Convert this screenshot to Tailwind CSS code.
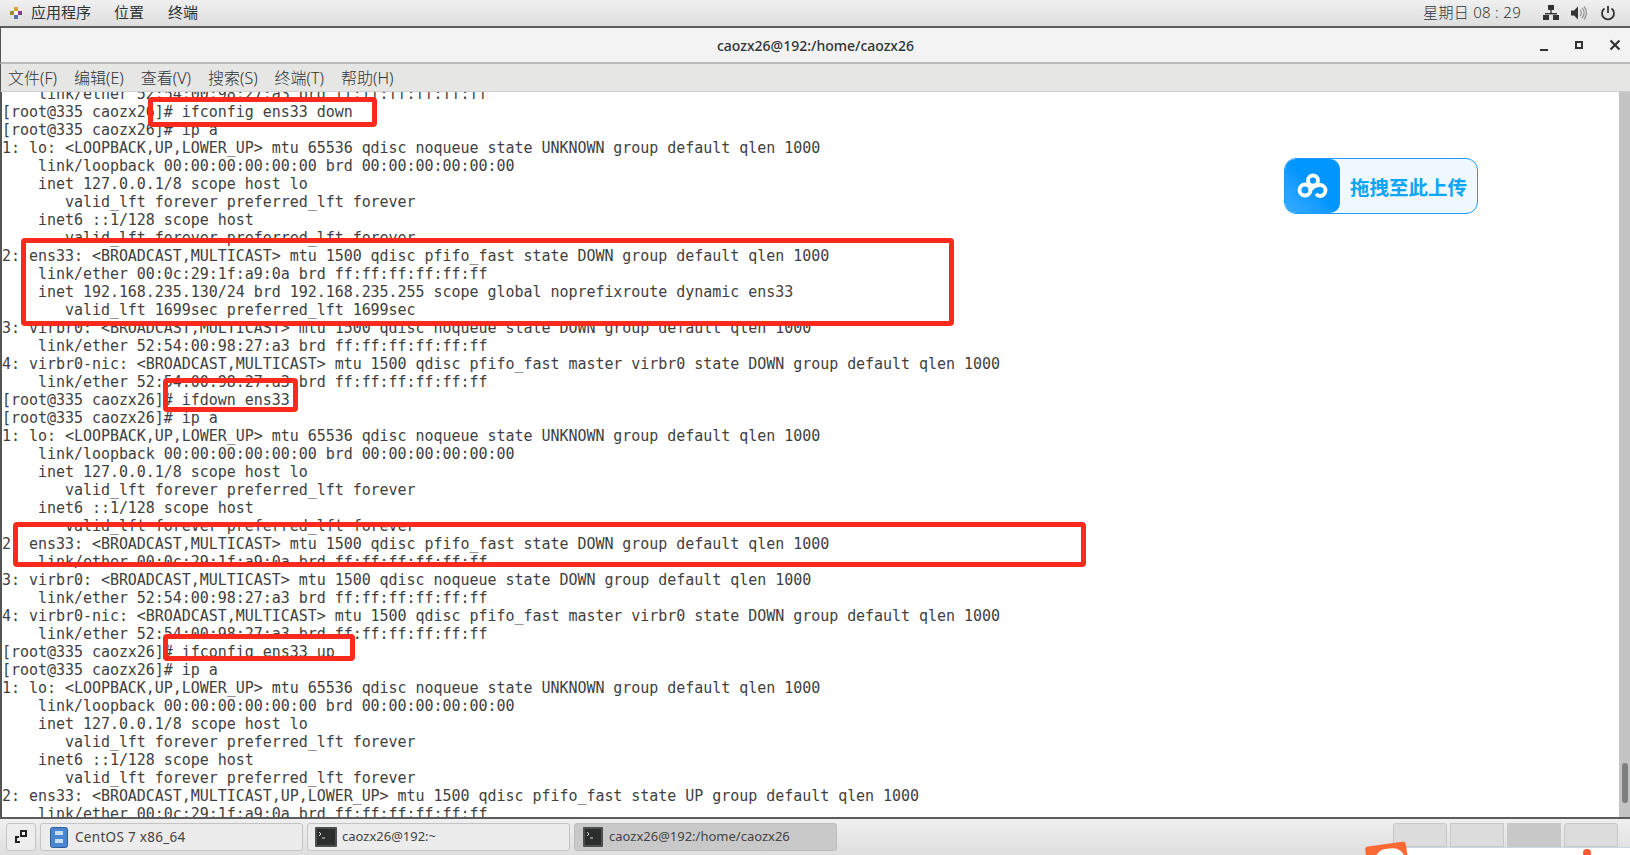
<!DOCTYPE html>
<html lang="en">
<head>
  <meta charset="UTF-8">
  <title>caozx26@192:/home/caozx26</title>
  <script src="https://cdn.jsdelivr.net/npm/@tailwindcss/browser@4"></script>
</head>
<body class="w-[1630px] h-[855px] overflow-hidden bg-white flex flex-col font-['Noto_Sans','Noto_Sans_CJK_SC',sans-serif] text-[#2e3436]">
  <!-- top panel -->
  <header class="h-[28px] shrink-0 flex items-center justify-between bg-gradient-to-b from-[#f0f0f0] to-[#dedede] border-b-2 border-[#5c5c5c] pl-[9px] pr-[14px] pb-[1px] text-[15px]">
    <div class="flex items-center">
      <svg width="14" height="14" viewBox="0 0 14 14" class="mr-[8px]">
        <rect x="1" y="5" width="4" height="4" fill="#9b8a2f"/><rect x="5" y="1" width="4" height="4" fill="#d6a431"/>
        <rect x="9" y="5" width="4" height="4" fill="#8a3f8f"/><rect x="5" y="9" width="4" height="4" fill="#4f6fa8"/>
        <rect x="5" y="5" width="4" height="4" fill="#ffffff"/>
      </svg>
      <span class="mr-[23px]">应用程序</span>
      <span class="mr-[24px]">位置</span>
      <span>终端</span>
    </div>
    <div class="flex items-center">
      <span class="mr-[22px] font-light tracking-[0.3px]">星期日 08 : 29</span>
      <svg width="16" height="16" viewBox="0 0 16 16" fill="#333" class="mr-[12px]"><rect x="5" y="0" width="6" height="5"/><rect x="7.3" y="5" width="1.4" height="4"/><rect x="2" y="8" width="12" height="1.4"/><rect x="0" y="10" width="6" height="5"/><rect x="10" y="10" width="6" height="5"/></svg>
      <svg width="16" height="16" viewBox="0 0 16 16" fill="none" class="mr-[13px]"><path d="M0 5.5h3l4-4v13l-4-4H0z" fill="#333"/><path d="M9 5a4 4 0 0 1 0 6M11 3a7 7 0 0 1 0 10M13 1.500a10 10 0 0 1 0 13" stroke="#999" stroke-width="1.300"/></svg>
      <svg width="16" height="16" viewBox="0 0 16 16" fill="none" stroke="#333" stroke-width="1.800"><path d="M4.500 3.500a6 6 0 1 0 7 0M8 1v7"/></svg>
    </div>
  </header>

  <!-- window title -->
  <div class="h-[36px] shrink-0 relative flex items-center justify-center bg-[#f3f3f3] border-b-2 border-[#b9b9b9] border-l border-l-[#555] font-medium text-[14px]">
    <span>caozx26@192:/home/caozx26</span>
    <div class="absolute right-[9px] top-0 h-full flex items-center gap-[26px]">
      <svg width="10" height="10" viewBox="0 0 10 10" fill="#333" class="mt-[3px]"><rect x="1" y="7" width="8" height="2"/></svg>
      <svg width="8" height="8" viewBox="0 0 8 8" fill="none" stroke="#333" stroke-width="2"><rect x="1" y="1" width="6" height="6"/></svg>
      <svg width="12" height="12" viewBox="0 0 12 12" fill="none" stroke="#333" stroke-width="2.200"><path d="M1.500 1.500l9 9M10.500 1.500l-9 9"/></svg>
    </div>
  </div>

  <!-- menu bar -->
  <nav class="h-[28px] shrink-0 flex items-center gap-[17px] pl-[7px] bg-[#e6e6e5] border-b border-[#cfcfcf] border-l border-l-[#555] text-[16px] leading-[20px] font-light">
    <span>文件(F)</span><span>编辑(E)</span><span>查看(V)</span><span>搜索(S)</span><span>终端(T)</span><span>帮助(H)</span>
  </nav>

  <!-- terminal -->
  <main class="h-[725px] shrink-0 relative overflow-hidden bg-white border-l-2 border-[#555] flex">
<pre class="flex-1 -mt-[7px] font-['DejaVu_Sans_Mono',monospace] text-[15px] leading-[18px] tracking-[-0.04px] text-[#3f3f3f]">    link/ether 52:54:00:98:27:a3 brd ff:ff:ff:ff:ff:ff
[root@335 caozx26]# ifconfig ens33 down
[root@335 caozx26]# ip a
1: lo: &lt;LOOPBACK,UP,LOWER_UP&gt; mtu 65536 qdisc noqueue state UNKNOWN group default qlen 1000
    link/loopback 00:00:00:00:00:00 brd 00:00:00:00:00:00
    inet 127.0.0.1/8 scope host lo
       valid_lft forever preferred_lft forever
    inet6 ::1/128 scope host
       valid_lft forever preferred_lft forever
2: ens33: &lt;BROADCAST,MULTICAST&gt; mtu 1500 qdisc pfifo_fast state DOWN group default qlen 1000
    link/ether 00:0c:29:1f:a9:0a brd ff:ff:ff:ff:ff:ff
    inet 192.168.235.130/24 brd 192.168.235.255 scope global noprefixroute dynamic ens33
       valid_lft 1699sec preferred_lft 1699sec
3: virbr0: &lt;BROADCAST,MULTICAST&gt; mtu 1500 qdisc noqueue state DOWN group default qlen 1000
    link/ether 52:54:00:98:27:a3 brd ff:ff:ff:ff:ff:ff
4: virbr0-nic: &lt;BROADCAST,MULTICAST&gt; mtu 1500 qdisc pfifo_fast master virbr0 state DOWN group default qlen 1000
    link/ether 52:54:00:98:27:a3 brd ff:ff:ff:ff:ff:ff
[root@335 caozx26]# ifdown ens33
[root@335 caozx26]# ip a
1: lo: &lt;LOOPBACK,UP,LOWER_UP&gt; mtu 65536 qdisc noqueue state UNKNOWN group default qlen 1000
    link/loopback 00:00:00:00:00:00 brd 00:00:00:00:00:00
    inet 127.0.0.1/8 scope host lo
       valid_lft forever preferred_lft forever
    inet6 ::1/128 scope host
       valid_lft forever preferred_lft forever
2: ens33: &lt;BROADCAST,MULTICAST&gt; mtu 1500 qdisc pfifo_fast state DOWN group default qlen 1000
    link/ether 00:0c:29:1f:a9:0a brd ff:ff:ff:ff:ff:ff
3: virbr0: &lt;BROADCAST,MULTICAST&gt; mtu 1500 qdisc noqueue state DOWN group default qlen 1000
    link/ether 52:54:00:98:27:a3 brd ff:ff:ff:ff:ff:ff
4: virbr0-nic: &lt;BROADCAST,MULTICAST&gt; mtu 1500 qdisc pfifo_fast master virbr0 state DOWN group default qlen 1000
    link/ether 52:54:00:98:27:a3 brd ff:ff:ff:ff:ff:ff
[root@335 caozx26]# ifconfig ens33 up
[root@335 caozx26]# ip a
1: lo: &lt;LOOPBACK,UP,LOWER_UP&gt; mtu 65536 qdisc noqueue state UNKNOWN group default qlen 1000
    link/loopback 00:00:00:00:00:00 brd 00:00:00:00:00:00
    inet 127.0.0.1/8 scope host lo
       valid_lft forever preferred_lft forever
    inet6 ::1/128 scope host
       valid_lft forever preferred_lft forever
2: ens33: &lt;BROADCAST,MULTICAST,UP,LOWER_UP&gt; mtu 1500 qdisc pfifo_fast state UP group default qlen 1000
    link/ether 00:0c:29:1f:a9:0a brd ff:ff:ff:ff:ff:ff</pre>
    <!-- scrollbar -->
    <div class="w-[11px] shrink-0 bg-[#c3c4c3] flex justify-center items-end pb-[14px]">
      <div class="w-[6px] h-[40px] rounded-full bg-[#7d7f7e]"></div>
    </div>

    <!-- red annotation boxes -->
    <div class="absolute left-[146px] top-[5px] w-[229px] h-[30px] border-[5px] border-[#fb2a1c] rounded-[4px]"></div>
    <div class="absolute left-[19px] top-[146px] w-[933px] h-[88px] border-[5px] border-[#fb2a1c] rounded-[4px]"></div>
    <div class="absolute left-[161px] top-[286px] w-[135px] h-[34px] border-[5px] border-[#fb2a1c] rounded-[4px]"></div>
    <div class="absolute left-[11px] top-[430px] w-[1073px] h-[45px] border-[5px] border-[#fb2a1c] rounded-[4px]"></div>
    <div class="absolute left-[161px] top-[542px] w-[192px] h-[27px] border-[5px] border-[#fb2a1c] rounded-[4px]"></div>

    <!-- upload badge -->
    <div class="absolute left-[1282px] top-[66px] w-[194px] h-[56px] rounded-[12px] border border-[#1f9bff] bg-[#eff8ff] flex items-center overflow-hidden">
      <div class="w-[55px] h-full rounded-[10px] bg-gradient-to-tr from-[#35acff] to-[#0096ff] to-50% flex items-center justify-center">
        <svg width="32" height="26" viewBox="0 0 32 26" fill="none" stroke="#fff" stroke-width="3.800"><circle cx="16" cy="7.500" r="5"/><circle cx="8" cy="17" r="5.500"/><path d="M12.500 18c3.500-5 6.500-6 10.500-6a5.500 5.500 0 1 1 0 11c-2 0-3-1-4-2"/></svg>
      </div>
      <span class="ml-[10px] mt-[3px] text-[19.500px] font-bold text-[#0aa5f5]">拖拽至此上传</span>
    </div>
  </main>

  <!-- bottom panel -->
  <footer class="flex-1 relative flex items-start bg-gradient-to-b from-[#efefef] to-[#dfdfdf] border-t-2 border-[#5c5c5c] pt-[4px] pl-[6px] text-[13px] text-[#444]">
    <div class="w-[30px] h-[28px] mr-[4px] flex items-center justify-center border border-[#c4c4c4] rounded-[3px] bg-[#ededed]">
      <svg width="14" height="14" viewBox="0 0 14 14" fill="none" stroke="#222" stroke-width="2"><rect x="7" y="1" width="5" height="5" fill="#fff"/><path d="M2 13V7h3M2 12h4"/></svg>
    </div>
    <div class="w-[263px] h-[28px] flex items-center pl-[9px] border border-[#c4c4c4] rounded-[3px] bg-[#ececec]">
      <svg width="18" height="21" viewBox="0 0 18 21"><rect x="0.500" y="0.500" width="17" height="20" rx="2" fill="#4a86cf" stroke="#2a5f9e"/><rect x="5" y="4" width="8" height="4" fill="#c9dcf2"/><rect x="5" y="12" width="8" height="4" fill="#c9dcf2"/></svg>
      <span class="ml-[7px] text-[13.500px] tracking-[0.3px]">CentOS 7 x86_64</span>
    </div>
    <div class="w-[263px] h-[28px] ml-[4px] flex items-center pl-[7px] border border-[#c4c4c4] rounded-[3px] bg-[#ececec]">
      <svg width="22" height="20" viewBox="0 0 22 20"><rect x="0" y="0" width="22" height="20" rx="1" fill="#4c4f4e"/><rect x="2" y="2" width="18" height="16" fill="#2b2e2d"/><path d="M4 5l2 2-2 2M7 11h3" stroke="#ddd" fill="none"/></svg>
      <span class="ml-[5px]">caozx26@192:~</span>
    </div>
    <div class="w-[263px] h-[28px] ml-[4px] flex items-center pl-[8px] border border-[#bdbdbd] rounded-[3px] bg-[#c9c9c9]">
      <svg width="20" height="20" viewBox="0 0 20 20"><rect x="0" y="0" width="20" height="20" rx="1" fill="#4c4f4e"/><rect x="2" y="2" width="16" height="16" fill="#2b2e2d"/><path d="M4 5l2 2-2 2M7 11h3" stroke="#ddd" fill="none"/></svg>
      <span class="ml-[6px]">caozx26@192:/home/caozx26</span>
    </div>

    <!-- workspace switcher -->
    <div class="absolute left-[1393px] top-[4px] h-[24px] flex gap-[3px]">
      <div class="w-[54px] h-full bg-[#dcdcdc] border border-[#c8c8c8] rounded-t-[3px]"></div>
      <div class="w-[54px] h-full bg-[#dcdcdc] border border-[#c8c8c8]"></div>
      <div class="w-[54px] h-full bg-[#c8c8c8]"></div>
      <div class="w-[54px] h-full bg-[#dcdcdc] border border-[#c8c8c8] rounded-t-[3px]"></div>
    </div>

    <!-- bit of overlapping window at the bottom right -->
    <div class="absolute left-[1405px] top-[28px] w-[225px] h-[8px] bg-white border-t border-[#cdd6e6]"></div>
    <div class="absolute left-[1366px] top-[25px] w-[41px] h-[20px] bg-[#fb6a35] rounded-[3px] -rotate-[8deg] overflow-hidden">
      <div class="ml-[8px] mt-[5px] w-[30px] h-[12px] bg-white rounded-t-full"></div>
    </div>
    <div class="absolute left-[1583px] top-[30px] w-[8px] h-[8px] rounded-full bg-[#fb5a30]"></div>
  </footer>
</body>
</html>
